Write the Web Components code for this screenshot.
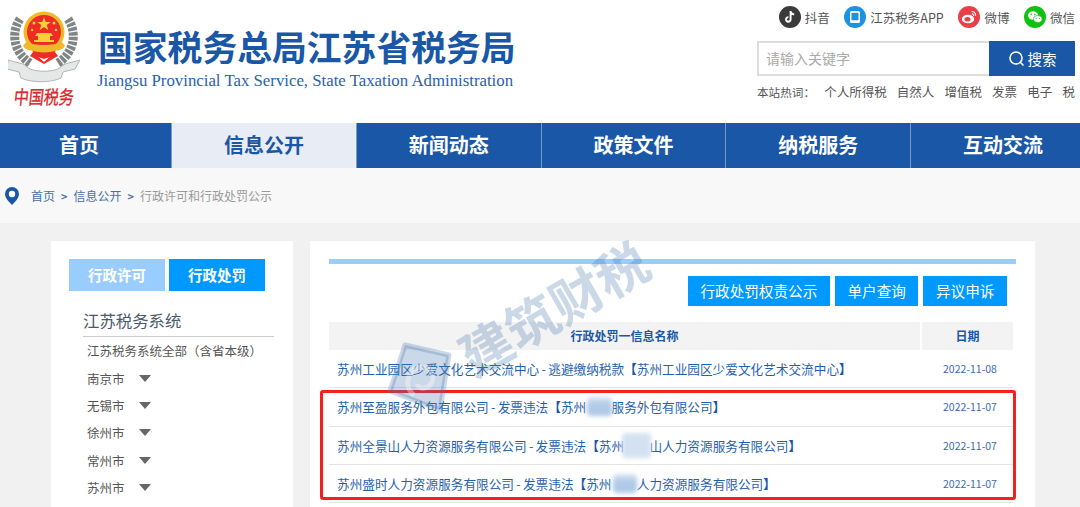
<!DOCTYPE html>
<html lang="zh-CN">
<head>
<meta charset="utf-8">
<title>国家税务总局江苏省税务局</title>
<style>
    html, body { margin: 0; height: 507px; overflow: hidden; background: #f1f1f1; }
    body { font-family: "Noto Sans CJK SC", "Liberation Sans", sans-serif; color: #555; }
    tax-page { height: 507px; }
</style>
</head>
<body>
<tax-page>
    <tax-header></tax-header>
    <tax-nav active="信息公开"></tax-nav>
    <tax-crumb></tax-crumb>
    <tax-main>
        <side-panel></side-panel>
        <penalty-panel>
            <penalty-row date="2022-11-08">苏州工业园区少爱文化艺术交流中心<i>-</i>逃避缴纳税款<b>【</b>苏州工业园区少爱文化艺术交流中心<b>】</b></penalty-row>
            <penalty-row date="2022-11-07">苏州至盈服务外包有限公司<i>-</i>发票违法<b>【</b>苏州<blur-mark kind="a">至盈</blur-mark>服务外包有限公司<b>】</b></penalty-row>
            <penalty-row date="2022-11-07">苏州全景山人力资源服务有限公司<i>-</i>发票违法<b>【</b>苏州<blur-mark kind="b">全景</blur-mark>山人力资源服务有限公司<b>】</b></penalty-row>
            <penalty-row date="2022-11-07">苏州盛时人力资源服务有限公司<i>-</i>发票违法<b>【</b>苏州<blur-mark kind="a">盛时</blur-mark>人力资源服务有限公司<b>】</b></penalty-row>
        </penalty-panel>
    </tax-main>
    <water-mark></water-mark>
</tax-page>

<script>
const FONT = '"Noto Sans CJK SC", "Liberation Sans", sans-serif';

class TaxPage extends HTMLElement {
    constructor() {
        super();
        this.attachShadow({ mode: 'open' });
        this.shadowRoot.innerHTML = `
            <style>
                :host { display: block; position: relative; overflow: hidden; font-family: ${FONT}; }
            </style>
            <slot></slot>
        `;
    }
}

class TaxHeader extends HTMLElement {
    constructor() {
        super();
        this.attachShadow({ mode: 'open' });
        this.shadowRoot.innerHTML = `
            <style>
                :host { display: flex; height: 123px; background: #fff; box-sizing: border-box; }
                .logo { width: 72px; margin-left: 8px; display: flex; flex-direction: column; align-items: center; padding-top: 10px; }
                .logo svg { display: block; }
                .logo span { font: 15px/20px ${FONT}; color: #d8282a; -webkit-text-stroke: .3px #d8282a; white-space: nowrap; transform: skewX(-6deg) scaleY(1.25); margin-top: 2px; }
                .names { margin-left: 17px; padding-top: 20px; color: #1a57a6; }
                h1 { margin: 0 0 -1px 1px; font: bold 34.800px/52px ${FONT}; white-space: nowrap; }
                p { margin: 0; font: 16.800px/20px "Liberation Serif", serif; color: #2a62b0; white-space: nowrap; }
                .right { margin-left: auto; width: 318px; margin-right: 5px; padding-top: 6px; }
                .tools { display: flex; justify-content: flex-end; align-items: center; height: 22px; font-size: 12.5px; color: #555; }
                .tools span { display: flex; align-items: center; gap: 4px; margin-left: 14.600px; white-space: nowrap; }
                .tools svg { display: block; }
                .search { display: flex; height: 35px; margin-top: 13px; }
                .input { flex: 1; box-sizing: border-box; border: 2px solid #ddd; border-right: 0; padding-left: 7px; font-size: 14px; line-height: 31px; color: #aaa; }
                .btn { width: 86px; background: #1a57a6; color: #fff; font-size: 14.500px; display: flex; align-items: center; justify-content: center; gap: 3px; }
                .hot { display: flex; justify-content: space-between; margin-top: 7px; font-size: 12.5px; line-height: 18px; color: #555; white-space: nowrap; }
                .hot span:first-child { margin-right: -1px; font-size: 11.6px; }
            </style>
            <div class="logo">
                <svg width="72" height="74" viewBox="0 0 72 74">
                    <path d="M12 9C3 22 5 42 22 53" fill="none" stroke="#7f8685" stroke-width="9" stroke-dasharray="3.500 1.200"/>
                    <path d="M60 9C69 22 67 42 50 53" fill="none" stroke="#7f8685" stroke-width="9" stroke-dasharray="3.500 1.200"/>
                    <path d="M0 50l15 4 7 5c9 3 19 3 28 0l7-5 15-4-5 9-12 3-2 6c-10 5-30 5-40 0l-2-6-12-3z" fill="#e6e8e7" stroke="#a2a6a5" stroke-width=".8"/>
                    <path d="M24 40h24l-3 6-9 3-9-3z" fill="#ee2b24"/>
                    <path d="M25 42l11 10 11-10 3 4-14 8-14-8z" fill="#ee2b24"/>
                    <circle cx="36" cy="22" r="20.500" fill="#f0b92a"/>
                    <circle cx="36" cy="22" r="17" fill="#ee2b24"/>
                    <path d="M36 7l1.700 5h5.200l-4.200 3 1.600 5-4.300-3-4.300 3 1.600-5-4.200-3h5.200z" fill="#f8d13a"/>
                    <circle cx="26" cy="13" r="1.500" fill="#f8d13a"/><circle cx="46" cy="13" r="1.500" fill="#f8d13a"/>
                    <circle cx="24" cy="20" r="1.300" fill="#f8d13a"/><circle cx="48" cy="20" r="1.300" fill="#f8d13a"/>
                    <path d="M29 23h14l2 3h-3v4h4v2H26v-2h4v-4h-3z" fill="#f8d13a"/>
                    <path d="M18 32c6 4 30 4 36 0l3 4c-4 8-38 8-42 0z" fill="#f0b92a"/>
                </svg>
                <span>中国税务</span>
            </div>
            <div class="names">
                <h1>国家税务总局江苏省税务局</h1>
                <p>Jiangsu Provincial Tax Service, State Taxation Administration</p>
            </div>
            <div class="right">
                <div class="tools">
                    <span>
                        <svg width="22" height="22" viewBox="0 0 22 22"><circle cx="11" cy="11" r="11" fill="#3a3a3a"/><path d="M11.600 5v8.400a2.300 2.300 0 1 1-2.200-2.300M11.600 5c.2 2 1.600 3.300 3.600 3.500" fill="none" stroke="#fff" stroke-width="1.900"/></svg>
                        抖音
                    </span>
                    <span>
                        <svg width="22" height="22" viewBox="0 0 22 22"><circle cx="11" cy="11" r="11" fill="#1a94e0"/><rect x="6" y="5" width="10" height="12" rx="1.500" fill="#fff"/><rect x="7.500" y="6.800" width="7" height="7.400" fill="#1a94e0"/></svg>
                        江苏税务APP
                    </span>
                    <span>
                        <svg width="22" height="22" viewBox="0 0 22 22"><circle cx="11" cy="11" r="11" fill="#ea3f46"/><ellipse cx="10" cy="13" rx="6.200" ry="4.300" fill="#fff"/><ellipse cx="9.500" cy="13.300" rx="3" ry="2.300" fill="#ea3f46"/><path d="M13.500 5.500c2.500-.3 4.500 1.800 3.800 4.300M13.800 7.800c1.200-.1 2 .8 1.700 2" fill="none" stroke="#fff" stroke-width="1.100"/></svg>
                        微博
                    </span>
                    <span>
                        <svg width="22" height="22" viewBox="0 0 22 22"><circle cx="11" cy="11" r="11" fill="#0fc20f"/><ellipse cx="9" cy="9.500" rx="5" ry="4.200" fill="#fff"/><ellipse cx="13.800" cy="13" rx="4.200" ry="3.400" fill="#fff" stroke="#0fc20f" stroke-width=".7"/><circle cx="7.300" cy="8.500" r=".8" fill="#0fc20f"/><circle cx="10.700" cy="8.500" r=".8" fill="#0fc20f"/><circle cx="12.300" cy="12.500" r=".6" fill="#0fc20f"/><circle cx="15.300" cy="12.500" r=".6" fill="#0fc20f"/></svg>
                        微信
                    </span>
                </div>
                <div class="search">
                    <div class="input">请输入关键字</div>
                    <div class="btn">
                        <svg width="17" height="17" viewBox="0 0 17 17"><circle cx="8" cy="8" r="6" fill="none" stroke="#fff" stroke-width="1.600"/><path d="M12.500 12.500l3 3" stroke="#fff" stroke-width="1.600"/></svg>
                        搜索
                    </div>
                </div>
                <div class="hot">
                    <span>本站热词：</span><span>个人所得税</span><span>自然人</span><span>增值税</span><span>发票</span><span>电子</span><span>税</span>
                </div>
            </div>
        `;
    }
}

class TaxNav extends HTMLElement {
    constructor() {
        super();
        this.attachShadow({ mode: 'open' });
    }

    connectedCallback() {
        const active = this.getAttribute('active');
        const items = ['首页', '信息公开', '新闻动态', '政策文件', '纳税服务', '互动交流'];
        this.shadowRoot.innerHTML = `
            <style>
                :host { display: block; height: 45px; overflow: hidden; background: #1a57a6; }
                nav { display: grid; grid-template-columns: repeat(6, 184.800px); margin-left: -12.800px; width: 1110px; }
                a { height: 45px; box-sizing: border-box; border-right: 1px solid #7b9ccb; font: bold 20px/44px ${FONT}; color: #fff; text-align: center; text-decoration: none; }
                a.on { background: #e8ecf5; color: #1a57a6; }
            </style>
            <nav>${items.map(t => `<a href="#" class="${t === active ? 'on' : ''}">${t}</a>`).join('')}</nav>
        `;
    }
}

class TaxCrumb extends HTMLElement {
    constructor() {
        super();
        this.attachShadow({ mode: 'open' });
        this.shadowRoot.innerHTML = `
            <style>
                :host { display: flex; align-items: center; height: 55px; background: #f8f8f8; padding: 0 0 0 5px; font-size: 12px; color: #4a6fa5; white-space: nowrap; }
                svg { display: block; margin-right: 12px; }
                i { font-style: normal; font-weight: bold; margin: 0 6px; font-size: 11px; }
                em { font-style: normal; color: #999; }
            </style>
            <svg width="14" height="18" viewBox="0 0 14 18"><path d="M7 0a7 7 0 0 1 7 7c0 4-4 8-7 11-3-3-7-7-7-11a7 7 0 0 1 7-7z" fill="#1a57a6"/><circle cx="7" cy="7" r="3.200" fill="#fff"/></svg>
            首页<i>&gt;</i>信息公开<i>&gt;</i><em>行政许可和行政处罚公示</em>
        `;
    }
}

class TaxMain extends HTMLElement {
    constructor() {
        super();
        this.attachShadow({ mode: 'open' });
        this.shadowRoot.innerHTML = `
            <style>
                :host { display: flex; gap: 17px; padding: 18px 0 0 51px; }
            </style>
            <slot></slot>
        `;
    }
}

class SidePanel extends HTMLElement {
    constructor() {
        super();
        this.attachShadow({ mode: 'open' });
        const cities = ['南京市', '无锡市', '徐州市', '常州市', '苏州市'];
        this.shadowRoot.innerHTML = `
            <style>
                :host { display: block; width: 242px; height: 300px; box-sizing: border-box; background: #fff; padding: 18px 19px 0 18px; }
                .tabs { display: flex; gap: 4px; }
                .tabs div { width: 96px; height: 32px; font: bold 14.500px/31px ${FONT}; color: #fff; text-align: center; background: #09f; }
                .tabs div:first-child { background: #9cf; }
                h3 { margin: 16px 0 0 14px; font: normal 16.400px/26px ${FONT}; color: #4a5a6c; border-bottom: 1px solid #ccc; padding-bottom: 3px; }
                ul { list-style: none; margin: 0; padding: 0 0 0 18px; font-size: 12.500px; color: #555; }
                li { display: flex; align-items: center; gap: 14px; height: 27.400px; white-space: nowrap; }
                li i { width: 0; height: 0; border: 6px solid transparent; border-top: 7px solid #666; border-bottom: 0; }
            </style>
            <div class="tabs"><div>行政许可</div><div>行政处罚</div></div>
            <h3>江苏税务系统</h3>
            <ul>
                <li>江苏税务系统全部（含省本级）</li>
                ${cities.map(c => `<li>${c}<i></i></li>`).join('')}
            </ul>
        `;
    }
}

class PenaltyPanel extends HTMLElement {
    constructor() {
        super();
        this.attachShadow({ mode: 'open' });
        this.shadowRoot.innerHTML = `
            <style>
                :host { display: block; position: relative; width: 725px; height: 300px; box-sizing: border-box; background: #fff; padding: 18px 19px 0; }
                .bar { height: 5px; background: #9cf; }
                .btns { display: flex; justify-content: flex-end; gap: 5px; margin: 12px 9px 0 0; }
                .btns div { height: 30px; padding: 0 12.600px; background: #09f; color: #fff; font-size: 14.600px; line-height: 30px; white-space: nowrap; }
                .head { display: grid; grid-template-columns: 591px 91px; gap: 2px; margin-top: 16px; font: bold 12px/28px ${FONT}; color: #1a57a6; text-align: center; }
                .head div { background: #f3f3f3; height: 28px; }
                .box { position: absolute; left: 10px; top: 149px; width: 696px; height: 110px; box-sizing: border-box; border: 3px solid #f5201c; border-radius: 3px; }
            </style>
            <div class="bar"></div>
            <div class="btns"><div>行政处罚权责公示</div><div>单户查询</div><div>异议申诉</div></div>
            <div class="head"><div>行政处罚一信息名称</div><div>日期</div></div>
            <slot></slot>
            <div class="box"></div>
        `;
    }
}

class PenaltyRow extends HTMLElement {
    constructor() {
        super();
        this.attachShadow({ mode: 'open' });
    }

    connectedCallback() {
        this.shadowRoot.innerHTML = `
            <style>
                :host { display: flex; align-items: center; width: 684px; height: 38.300px; box-sizing: border-box; border-bottom: 1px solid #e4e4e4; padding-left: 8px; font-size: 12.650px; color: #1f62ae; white-space: nowrap; }
                .name { flex: 1; }
                .date { width: 91px; padding-left: 5px; box-sizing: border-box; text-align: center; font-size: 10.500px; color: #3a6bb0; }
                ::slotted(b) { color: #1a57a6; }
                ::slotted(i) { font-style: normal; margin: 0 2.300px; }
            </style>
            <div class="name"><slot></slot></div>
            <div class="date">${this.getAttribute('date')}</div>
        `;
    }
}

class BlurMark extends HTMLElement {
    constructor() {
        super();
        this.attachShadow({ mode: 'open' });
    }

    connectedCallback() {
        const wide = this.getAttribute('kind') === 'b';
        this.shadowRoot.innerHTML = `
            <style>
                :host { display: inline-block; color: transparent; position: relative; }
                i { position: absolute; left: ${wide ? -2 : 1}px; right: ${wide ? -2 : 0}px; top: ${wide ? -3 : 0}px; bottom: ${wide ? -3 : 0}px;
                    background: ${wide ? '#d3e1f1' : 'linear-gradient(#d9e5f3, #b0c9e6 45%)'}; filter: blur(2px); border-radius: 4px; }
            </style>
            <slot></slot><i></i>
        `;
    }
}

class WaterMark extends HTMLElement {
    constructor() {
        super();
        this.attachShadow({ mode: 'open' });
        this.shadowRoot.innerHTML = `
            <style>
                :host { display: block; position: absolute; left: 385px; top: 245px; width: 280px; height: 190px; pointer-events: none; }
                span { position: absolute; left: 64px; top: 32px; font: bold 52px/60px ${FONT}; color: rgba(70, 115, 170, .28); transform: rotate(-30deg); white-space: nowrap; }
                svg { position: absolute; left: 0; top: 95px; }
            </style>
            <span>建筑财税</span>
            <svg width="70" height="76" viewBox="0 0 70 76">
                <path d="M20 5L64 15 55 70 5 51z" fill="rgba(70,115,170,.28)" stroke="rgba(70,115,170,.28)" stroke-width="5" stroke-linejoin="round" paint-order="stroke"/>
                <path d="M29 55c-11-8-7-27 7-28 11-1 16 12 8 19-5 4-11 2-12-2" fill="none" stroke="#fff" stroke-opacity=".35" stroke-width="5"/>
            </svg>
        `;
    }
}

customElements.define('tax-page', TaxPage);
customElements.define('tax-header', TaxHeader);
customElements.define('tax-nav', TaxNav);
customElements.define('tax-crumb', TaxCrumb);
customElements.define('tax-main', TaxMain);
customElements.define('side-panel', SidePanel);
customElements.define('penalty-panel', PenaltyPanel);
customElements.define('penalty-row', PenaltyRow);
customElements.define('blur-mark', BlurMark);
customElements.define('water-mark', WaterMark);
</script>
</body>
</html>
